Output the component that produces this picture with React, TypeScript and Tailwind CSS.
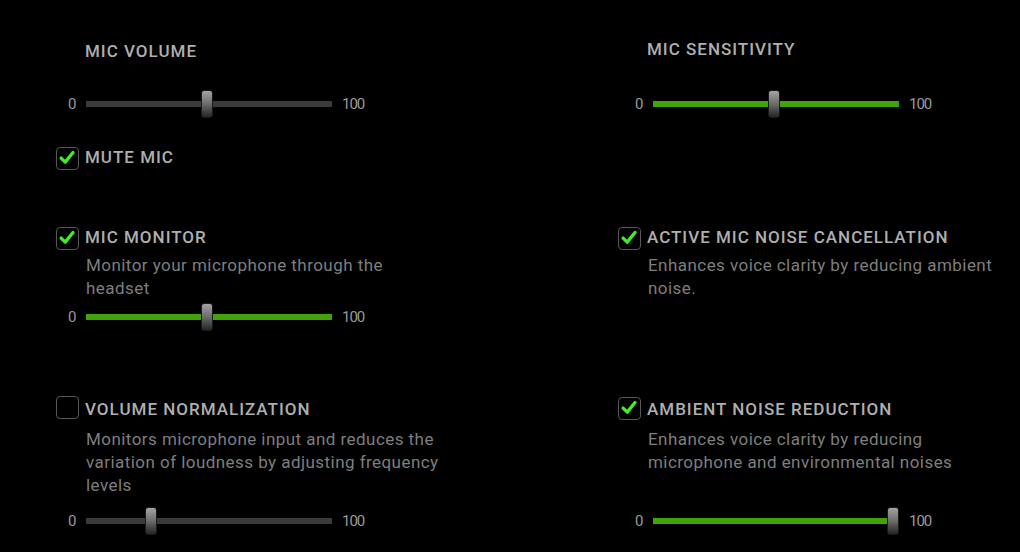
import React from "react";

const font = { fontFamily: "Roboto, 'Noto Sans', sans-serif" };

function Check({ checked }: { checked: boolean }) {
  return (
    <div className="w-[23px] h-[23px] shrink-0 rounded-[4px] border-[1.5px] border-[#575757] bg-black flex items-center justify-center">
      {checked && (
        <svg width="23" height="23" viewBox="0 0 23 23">
          <path d="M4.5 11 L9 15.5 L17.5 5" fill="none" stroke="#3ef021" strokeWidth="3.6" strokeLinejoin="round" strokeLinecap="round" />
        </svg>
      )}
    </div>
  );
}

function Slider({ value, active, className }: { value: number; active: boolean; className?: string }) {
  return (
    <div className={"flex items-center h-[28px] " + (className ?? "")}>
      <span className="w-[18px] text-[15px] leading-none tracking-[-1px] text-[#9a9a9a]">0</span>
      <div className={"relative w-[246px] h-[6px] " + (active ? "bg-[#42a308]" : "bg-[#3a3a3a]")}>
        <div
          className="absolute top-[-11px] w-[12px] h-[28px] rounded-[3px] bg-linear-to-b from-[#a3a3a3] via-[#6c6c6c] to-[#262626] border border-[#1a1a1a]"
          style={{ left: `${(value / 100) * 234}px` }}
        />
      </div>
      <span className="ml-[10px] text-[15px] leading-none tracking-[-1px] text-[#9a9a9a]">100</span>
    </div>
  );
}

function Title({ children, className }: { children: React.ReactNode; className?: string }) {
  return (
    <div className={"text-[17px] leading-[20px] font-medium tracking-[1px] text-[#afafaf] whitespace-nowrap " + (className ?? "")}>
      {children}
    </div>
  );
}

function CheckRow({ checked, label, className, titleClass }: { checked: boolean; label: string; className?: string; titleClass?: string }) {
  return (
    <div className={"flex items-start gap-[6px] " + (className ?? "")}>
      <Check checked={checked} />
      <Title className={titleClass}>{label}</Title>
    </div>
  );
}

function Desc({ lines, className }: { lines: string[]; className?: string }) {
  return (
    <div className={"pl-[30px] text-[17px] leading-[23px] tracking-[0.45px] text-[#7e7e7e] whitespace-nowrap " + (className ?? "")}>
      {lines.map((l, i) => (
        <div key={i}>{l}</div>
      ))}
    </div>
  );
}

export default function App() {
  return (
    <div className="w-[1020px] h-[552px] bg-black overflow-hidden grid grid-cols-[562px_1fr] pl-[56px]" style={font}>
      <div className="flex flex-col">
        <Title className="mt-[41px] pl-[29px]">MIC VOLUME</Title>
        <Slider value={49} active={false} className="mt-[29px] ml-[12px]" />
        <CheckRow checked label="MUTE MIC" className="mt-[29px]" />
        <CheckRow checked label="MIC MONITOR" className="mt-[57px]" />
        <Desc className="mt-[4px]" lines={["Monitor your microphone through the", "headset"]} />
        <Slider value={49} active className="mt-[3px] ml-[12px]" />
        <CheckRow checked={false} label="VOLUME NORMALIZATION" className="mt-[65px]" titleClass="mt-[3px]" />
        <Desc className="mt-[9px]" lines={["Monitors microphone input and reduces the", "variation of loudness by adjusting frequency", "levels"]} />
        <Slider value={25} active={false} className="mt-[10px] ml-[12px]" />
      </div>
      <div className="flex flex-col">
        <Title className="mt-[39px] pl-[29px]">MIC SENSITIVITY</Title>
        <Slider value={49} active className="mt-[31px] ml-[17px]" />
        <CheckRow checked label="ACTIVE MIC NOISE CANCELLATION" className="mt-[109px]" />
        <Desc className="mt-[4px]" lines={["Enhances voice clarity by reducing ambient", "noise."]} />
        <CheckRow checked label="AMBIENT NOISE REDUCTION" className="mt-[97px]" titleClass="mt-[2px]" />
        <Desc className="mt-[8px]" lines={["Enhances voice clarity by reducing", "microphone and environmental noises"]} />
        <Slider value={100} active className="mt-[33px] ml-[17px]" />
      </div>
    </div>
  );
}
